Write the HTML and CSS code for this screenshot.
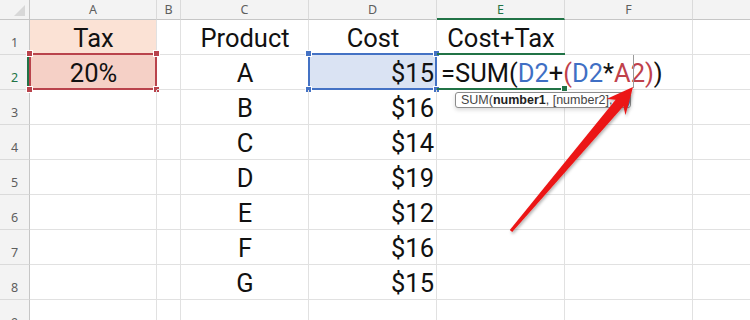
FILE: index.html
```html
<!DOCTYPE html>
<html>
<head lang="en">
    <meta charset="UTF-8">
    <title>Cost+Tax</title>
    <link rel="stylesheet" href="styles.css">
</head>
<body>
<div class="page">
    <div class="sheet">
        <!-- column headers -->
        <div class="corner"><span class="tri"></span></div>
        <div class="hd">A</div>
        <div class="hd">B</div>
        <div class="hd">C</div>
        <div class="hd">D</div>
        <div class="hd active">E</div>
        <div class="hd">F</div>
        <div class="hd"></div>

        <!-- row 1 -->
        <div class="rh">1</div>
        <div class="cell c tax">Tax</div>
        <div class="cell"></div>
        <div class="cell c">Product</div>
        <div class="cell c">Cost</div>
        <div class="cell c">Cost+Tax</div>
        <div class="cell"></div>
        <div class="cell"></div>

        <!-- row 2 -->
        <div class="rh active">2</div>
        <div class="cell c rate">
            20%
            <span class="sel red">
                <i class="h tl"></i><i class="h tr"></i><i class="h bl"></i><i class="h br"></i>
            </span>
        </div>
        <div class="cell"></div>
        <div class="cell c">A</div>
        <div class="cell r ref">
            $15
            <span class="sel blue">
                <i class="h tl"></i><i class="h tr"></i><i class="h bl"></i><i class="h br"></i>
            </span>
        </div>
        <div class="cell edit">
            <span class="formula">=SUM(<span class="b">D2</span>+<span class="rd">(</span><span class="b">D2</span>*<span class="rd">A2)</span>)</span>
            <span class="cursor"></span>
            <span class="fill"></span>
            <div class="tip">SUM(<b>number1</b>, [number2], ...)</div>
        </div>
        <div class="cell"></div>
        <div class="cell"></div>

        <!-- rows 3-8 -->
        <div class="rh">3</div>
        <div class="cell"></div><div class="cell"></div>
        <div class="cell c">B</div><div class="cell r">$16</div>
        <div class="cell"></div><div class="cell"></div><div class="cell"></div>

        <div class="rh">4</div>
        <div class="cell"></div><div class="cell"></div>
        <div class="cell c">C</div><div class="cell r">$14</div>
        <div class="cell"></div><div class="cell"></div><div class="cell"></div>

        <div class="rh">5</div>
        <div class="cell"></div><div class="cell"></div>
        <div class="cell c">D</div><div class="cell r">$19</div>
        <div class="cell"></div><div class="cell"></div><div class="cell"></div>

        <div class="rh">6</div>
        <div class="cell"></div><div class="cell"></div>
        <div class="cell c">E</div><div class="cell r">$12</div>
        <div class="cell"></div><div class="cell"></div><div class="cell"></div>

        <div class="rh">7</div>
        <div class="cell"></div><div class="cell"></div>
        <div class="cell c">F</div><div class="cell r">$16</div>
        <div class="cell"></div><div class="cell"></div><div class="cell"></div>

        <div class="rh">8</div>
        <div class="cell"></div><div class="cell"></div>
        <div class="cell c">G</div><div class="cell r">$15</div>
        <div class="cell"></div><div class="cell"></div><div class="cell"></div>

        <div class="rh">9</div>
        <div class="cell"></div><div class="cell"></div>
        <div class="cell"></div><div class="cell"></div>
        <div class="cell"></div><div class="cell"></div><div class="cell"></div>
    </div>

    <!-- callout arrow -->
    <svg class="arrow" width="750" height="320" viewBox="0 0 750 320">
        <defs>
            <linearGradient id="red" x1="0" y1="0" x2="1" y2="1">
                <stop offset="0" stop-color="#ff2a2a"/>
                <stop offset="1" stop-color="#d80000"/>
            </linearGradient>
            <filter id="shadow" x="-20%" y="-20%" width="140%" height="140%">
                <feDropShadow dx="1" dy="2" stdDeviation="1.5" flood-color="#000" flood-opacity="0.3"/>
            </filter>
        </defs>
        <polygon fill="url(#red)" filter="url(#shadow)"
                 points="633,87 606.5,99 615.6,99.8 509.8,230 512.2,231.9 623.4,106.3 625.5,115"/>
    </svg>
</div>
</body>
</html>
```

FILE: styles.css
```css
html, body {
    margin: 0;
    padding: 0;
    background: #fff;
}

.page {
    position: relative;
    width: 750px;
    height: 320px;
    overflow: hidden;
}

.sheet {
    display: grid;
    grid-template-columns: 30px 127px 24px repeat(5, 128px);
    grid-template-rows: 20px repeat(9, 35px);
    font-family: Roboto, "Liberation Sans", sans-serif;
    color: #111;
}

.sheet > div {
    box-sizing: border-box;
}

/* headers */
.corner {
    position: relative;
    background: #f3f3f3;
    border-right: 1px solid #c6c6c6;
    border-bottom: 1px solid #c6c6c6;
}

.corner .tri {
    position: absolute;
    right: 4px;
    bottom: 3px;
    width: 0;
    height: 0;
    border-left: 11px solid transparent;
    border-bottom: 11px solid #d8d8d8;
}

.hd {
    display: flex;
    align-items: center;
    justify-content: center;
    background: #f3f3f3;
    border-right: 1px solid #dadada;
    border-bottom: 1px solid #c6c6c6;
    font-family: "Noto Sans", "Open Sans", sans-serif;
    font-size: 12.5px;
    color: #5e5e5e;
}

.hd.active {
    color: #217346;
    border-bottom: 2px solid #217346;
}

.rh {
    display: flex;
    align-items: flex-end;
    justify-content: center;
    padding-bottom: 5px;
    background: #f3f3f3;
    border-right: 1px solid #c6c6c6;
    border-bottom: 1px solid #dadada;
    font-family: "Noto Sans", "Open Sans", sans-serif;
    font-size: 12.5px;
    line-height: 1;
    color: #5e5e5e;
}

.rh.active {
    color: #217346;
    border-right: 3px solid #217346;
    padding-left: 2px;
}

/* cells */
.cell {
    position: relative;
    display: flex;
    align-items: flex-end;
    padding: 0 3px 3px 4px;
    border-right: 1px solid #e1e1e1;
    border-bottom: 1px solid #e1e1e1;
    font-size: 25.5px;
    line-height: 1;
    white-space: nowrap;
}

.cell.c {
    justify-content: center;
}

.cell.r {
    justify-content: flex-end;
    padding-right: 2px;
}

.cell.tax {
    background: #fbe2d5;
}

.cell.rate {
    background: #f5d0c6;
}

.cell.ref {
    background: #dae3f3;
}

/* selection outlines */
.sel {
    position: absolute;
    left: -1px;
    top: -2px;
    right: -1px;
    bottom: -1px;
    border: 2px solid;
}

.sel.red {
    border-color: #b9434c;
}

.sel.blue {
    border-color: #4472c4;
}

.sel .h {
    position: absolute;
    width: 5px;
    height: 5px;
    border: 1px solid #fff;
    background: currentColor;
}

.sel.red .h {
    color: #b9434c;
}

.sel.blue .h {
    color: #4472c4;
}

.sel .tl { left: -5px; top: -5px; }
.sel .tr { right: -5px; top: -5px; }
.sel .bl { left: -5px; bottom: -5px; }
.sel .br { right: -5px; bottom: -5px; }

/* cell being edited */
.cell.edit {
    overflow: visible;
    border-right: none;
    border-top: 2px solid #217346;
    border-bottom: 2px solid #217346;
    margin-top: -2px;
    padding-bottom: 2px;
    z-index: 2;
}

.formula .b {
    color: #3f6fc4;
}

.formula .rd {
    color: #c0414b;
}

.cursor {
    position: absolute;
    left: 196px;
    top: 0;
    bottom: 0;
    width: 1px;
    background: #9a9a9a;
}

.fill {
    position: absolute;
    right: -3px;
    bottom: -4px;
    width: 5px;
    height: 5px;
    background: #217346;
    border: 1px solid #fff;
}

.tip {
    position: absolute;
    left: 18px;
    top: 37px;
    width: 176px;
    height: 16px;
    box-sizing: border-box;
    padding: 0 5px;
    border: 1px solid #8c8c8c;
    border-radius: 3px;
    background: #fff;
    box-shadow: 0 2px 4px rgba(0, 0, 0, 0.15);
    font-family: "Liberation Sans", Arial, sans-serif;
    font-size: 12.5px;
    line-height: 14px;
    color: #444;
    overflow: hidden;
}

.tip b {
    color: #222;
}

.arrow {
    position: absolute;
    left: 0;
    top: 0;
    pointer-events: none;
    z-index: 5;
}
```
